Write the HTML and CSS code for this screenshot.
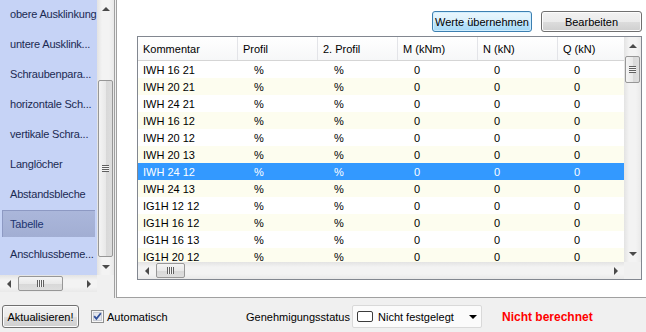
FILE: index.html
```html
<!DOCTYPE html>
<html lang="de">
<head>
  <meta charset="UTF-8">
  <title>Tabelle</title>
  <link rel="stylesheet" href="styles.css">
</head>
<body>
  <div class="app">
    <div class="main">
      <div class="nav">
        <div class="nav-top">
          <ul class="nav-list">
            <li>obere Ausklinkung</li>
            <li>untere Ausklink...</li>
            <li>Schraubenpara...</li>
            <li>horizontale Sch...</li>
            <li>vertikale Schra...</li>
            <li>Langlöcher</li>
            <li>Abstandsbleche</li>
            <li class="active">Tabelle</li>
            <li>Anschlussbeme...</li>
          </ul>
          <div class="vscroll nav-vscroll">
            <span class="arr up"></span>
            <span class="thumb"><i class="grip"></i></span>
            <span class="arr down"></span>
          </div>
        </div>
        <div class="nav-bottom">
          <div class="hscroll nav-hscroll">
            <span class="arr left"></span>
            <span class="thumb"><i class="grip"></i></span>
            <span class="arr right"></span>
          </div>
          <div class="corner"></div>
        </div>
      </div>

      <div class="content">
        <div class="toolbar">
          <button class="btn focus">Werte übernehmen</button>
          <button class="btn">Bearbeiten</button>
        </div>
        <div class="grid">
          <div class="grid-top">
            <div class="viewport">
              <div class="row head">
                <span class="cell">Kommentar</span>
                <span class="cell">Profil</span>
                <span class="cell">2. Profil</span>
                <span class="cell">M (kNm)</span>
                <span class="cell">N (kN)</span>
                <span class="cell">Q (kN)</span>
              </div>
              <div class="row"><span class="cell">IWH 16 21</span><span class="cell">%</span><span class="cell">%</span><span class="cell">0</span><span class="cell">0</span><span class="cell">0</span></div>
              <div class="row alt"><span class="cell">IWH 20 21</span><span class="cell">%</span><span class="cell">%</span><span class="cell">0</span><span class="cell">0</span><span class="cell">0</span></div>
              <div class="row"><span class="cell">IWH 24 21</span><span class="cell">%</span><span class="cell">%</span><span class="cell">0</span><span class="cell">0</span><span class="cell">0</span></div>
              <div class="row alt"><span class="cell">IWH 16 12</span><span class="cell">%</span><span class="cell">%</span><span class="cell">0</span><span class="cell">0</span><span class="cell">0</span></div>
              <div class="row"><span class="cell">IWH 20 12</span><span class="cell">%</span><span class="cell">%</span><span class="cell">0</span><span class="cell">0</span><span class="cell">0</span></div>
              <div class="row alt"><span class="cell">IWH 20 13</span><span class="cell">%</span><span class="cell">%</span><span class="cell">0</span><span class="cell">0</span><span class="cell">0</span></div>
              <div class="row sel"><span class="cell">IWH 24 12</span><span class="cell">%</span><span class="cell">%</span><span class="cell">0</span><span class="cell">0</span><span class="cell">0</span></div>
              <div class="row alt"><span class="cell">IWH 24 13</span><span class="cell">%</span><span class="cell">%</span><span class="cell">0</span><span class="cell">0</span><span class="cell">0</span></div>
              <div class="row"><span class="cell">IG1H 12 12</span><span class="cell">%</span><span class="cell">%</span><span class="cell">0</span><span class="cell">0</span><span class="cell">0</span></div>
              <div class="row alt"><span class="cell">IG1H 16 12</span><span class="cell">%</span><span class="cell">%</span><span class="cell">0</span><span class="cell">0</span><span class="cell">0</span></div>
              <div class="row"><span class="cell">IG1H 16 13</span><span class="cell">%</span><span class="cell">%</span><span class="cell">0</span><span class="cell">0</span><span class="cell">0</span></div>
              <div class="row alt"><span class="cell">IG1H 20 12</span><span class="cell">%</span><span class="cell">%</span><span class="cell">0</span><span class="cell">0</span><span class="cell">0</span></div>
            </div>
            <div class="vscroll grid-vscroll">
              <span class="arr up"></span>
              <span class="thumb"><i class="grip"></i></span>
              <span class="arr down"></span>
            </div>
          </div>
          <div class="grid-bottom">
            <div class="hscroll grid-hscroll">
              <span class="arr left"></span>
              <span class="thumb"><i class="grip"></i></span>
              <span class="arr right"></span>
            </div>
            <div class="corner"></div>
          </div>
        </div>
      </div>
    </div>

    <div class="statusbar">
      <button class="btn refresh">Aktualisieren!</button>
      <label class="check">
        <svg width="13" height="13" viewBox="0 0 13 13">
          <rect x="0.5" y="0.5" width="12" height="12" fill="#f6f6f6" stroke="#8e8f8f"/>
          <rect x="2.5" y="2.5" width="8" height="8" fill="#e4e7ee" stroke="#c9ccd4"/>
          <path d="M3.2 6.2 L5.4 8.8 L9.8 3.2" fill="none" stroke="#31509a" stroke-width="1.8"/>
        </svg>
        <span>Automatisch</span>
      </label>
      <span class="status-label">Genehmigungsstatus</span>
      <div class="combo">
        <span class="swatch"></span>
        <span>Nicht festgelegt</span>
        <span class="combo-arrow"></span>
      </div>
      <span class="state">Nicht berechnet</span>
    </div>
  </div>
</body>
</html>
```

FILE: styles.css
```css
* { box-sizing: border-box; }
body { margin: 0; font-family: "Liberation Sans", Arial, sans-serif; font-size: 11px; color: #000; background: #f0f0f0; }
.app { width: 646px; height: 332px; display: flex; flex-direction: column; overflow: hidden; }
.main { display: flex; height: 298px; flex: none; }

/* left navigation */
.nav { width: 115px; flex: none; border-right: 1px solid #a0a0a0; display: flex; flex-direction: column; }
.nav-top { display: flex; height: 275px; }
.nav-list { list-style: none; margin: 0; padding: 0; width: 97px; background: #c6d3f6; overflow: hidden; }
.nav-list li { height: 27px; margin: 0 2px 3px; padding-left: 8px; display: flex; align-items: center; white-space: nowrap; color: #1b2a52; letter-spacing: -0.2px; }
.nav-list li.active { background: linear-gradient(#abb7db, #a2aed3); box-shadow: inset 1px 1px 0 #8d99c3; color: #1d3570; }
.nav-bottom { display: flex; height: 17px; }
.nav-hscroll { width: 97px; }

/* scrollbars */
.vscroll { width: 17px; flex: none; display: flex; flex-direction: column; background: linear-gradient(to right, #e3e3e3, #f3f3f3 30%, #f3f3f3 70%, #e9e9e9); }
.hscroll { height: 17px; display: flex; background: linear-gradient(#e3e3e3, #f3f3f3 30%, #f3f3f3 70%, #e9e9e9); }
.arr { flex: none; width: 17px; height: 17px; display: flex; align-items: center; justify-content: center; }
.arr::before { content: ""; width: 0; height: 0; border: 4px solid transparent; }
.arr.up::before { border-top-width: 0; border-bottom-color: #4a4a4a; }
.arr.down::before { border-bottom-width: 0; border-top-color: #4a4a4a; }
.arr.left::before { border-left-width: 0; border-right-color: #4a4a4a; }
.arr.right::before { border-right-width: 0; border-left-color: #4a4a4a; }
.vscroll .arr.down { margin-top: auto; }
.hscroll .arr.right { margin-left: auto; }
.thumb { display: flex; align-items: center; justify-content: center; border: 1px solid #979797; border-radius: 2px; }
.vscroll .thumb { margin: 0 1px; background: linear-gradient(to right, #f4f4f4, #e9e9e9 50%, #d8d8d8 51%, #dedede); }
.hscroll .thumb { margin: 1px 0; background: linear-gradient(#f4f4f4, #e9e9e9 50%, #d8d8d8 51%, #dedede); }
.vscroll .grip { width: 7px; height: 7px; background: repeating-linear-gradient(#606060 0 1px, #f4f4f4 1px 2px); }
.hscroll .grip { width: 7px; height: 7px; background: repeating-linear-gradient(to right, #606060 0 1px, #f4f4f4 1px 2px); }
.nav-vscroll .thumb { margin-top: 63px; height: 177px; }
.nav-hscroll .thumb { margin-left: 1px; width: 45px; }
.grid-vscroll .thumb { margin-top: 2px; height: 27px; }
.grid-hscroll .thumb { margin-left: 1px; width: 29px; }
.corner { width: 17px; height: 17px; flex: none; background: #f0f0f0; }

/* content */
.content { flex: 1; min-width: 0; margin-left: 1px; border-left: 1px solid #a0a0a0; border-bottom: 1px solid #a0a0a0; background: #fff; }
.toolbar { display: flex; justify-content: flex-end; gap: 9px; padding: 11px 4px 0; }
.btn { font: inherit; color: #000; padding: 0; border: 1px solid #707070; border-radius: 3px; background: linear-gradient(#f2f2f2, #ebebeb 50%, #dddddd 51%, #cfcfcf); box-shadow: inset 0 0 0 1px #fcfcfc; }
.toolbar .btn { height: 21px; width: 101px; }
.toolbar .btn.focus { width: 100px; border-color: #3c7fb1; background: linear-gradient(#eaf6fd, #d9f0fc 50%, #bee6fd 51%, #a7d9f5); box-shadow: inset 0 0 0 1px #cfeeff; }

/* table */
.grid { margin: 4px 4px 0 20px; border: 1px solid #828790; background: #fff; }
.grid-top { display: flex; height: 225px; }
.viewport { flex: 1; min-width: 0; overflow: hidden; }
.row { display: flex; height: 17px; align-items: center; white-space: nowrap; }
.row.alt { background: #fdfdef; }
.row.sel { background: #3399ff; color: #fff; }
.cell { flex: none; width: 80px; padding-left: 16px; }
.cell:first-child { width: 100px; padding-left: 5px; }
.head { height: 24px; background: linear-gradient(#ffffff, #f6f7f8); border-bottom: 1px solid #d5d5d5; }
.head .cell { height: 100%; padding-left: 5px; display: flex; align-items: center; border-right: 1px solid #e3e4e8; }
.grid-bottom { display: flex; height: 17px; }
.grid-hscroll { flex: 1; }

/* status bar */
.statusbar { flex: 1; display: flex; align-items: center; padding-top: 3px; }
.btn.refresh { margin-left: 2px; width: 77px; height: 23px; }
.check { margin-left: 12px; width: 155px; display: flex; align-items: center; gap: 3px; }
.check svg { display: block; }
.status-label { width: 106px; }
.combo { width: 130px; height: 23px; border: 1px solid #d9d9d9; border-radius: 2px; background: #fbfbfb; display: flex; align-items: center; padding: 0 4px; }
.swatch { width: 16px; height: 11px; border: 1px solid #3c3c3c; border-radius: 2px; background: #fff; margin-right: 5px; }
.combo-arrow { margin-left: auto; width: 0; height: 0; border: 4px solid transparent; border-bottom-width: 0; border-top-color: #000; }
.state { margin-left: 20px; color: #ff0000; font-weight: bold; font-size: 12px; }
```
